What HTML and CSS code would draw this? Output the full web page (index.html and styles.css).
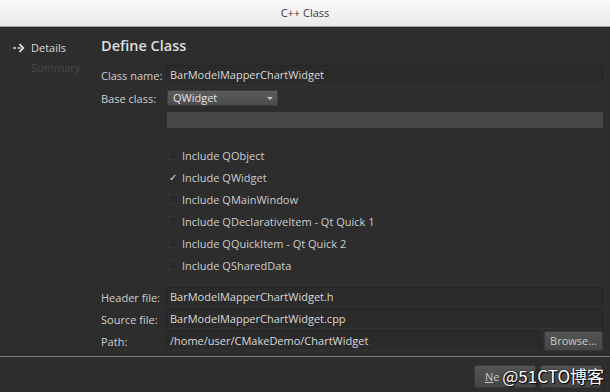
FILE: index.html
```html
<!DOCTYPE html>
<html lang="en">
<head>
    <meta charset="UTF-8">
    <title>C++ Class</title>
<link rel="stylesheet" href="styles.css">
</head>
<body>

<div class="window">
    <div class="titlebar">C++ Class</div>

    <div class="main">
        <!-- wizard steps -->
        <div class="sidebar">
            <div class="step current">
                <svg class="step-arrow" width="12" height="10" viewBox="0 0 12 10">
                    <path d="M0 5h3M4.5 5h3" stroke="#d8d8d8" stroke-width="1.4"/>
                    <path d="M6.5 1.2l3.8 3.8-3.8 3.8" fill="none" stroke="#e8e8e8" stroke-width="1.8"/>
                </svg>
                Details
            </div>
            <div class="step">Summary</div>
        </div>

        <div class="content">
            <h2>Define Class</h2>

            <div class="row row-first">
                <span class="label">Class name:</span>
                <div class="field">BarModelMapperChartWidget</div>
            </div>
            <div class="row row-combo">
                <span class="label">Base class:</span>
                <div class="combo">QWidget<span class="combo-arrow"></span></div>
            </div>
            <div class="row row-blank">
                <span class="label"></span>
                <div class="blank"></div>
            </div>

            <div class="checks">
                <div class="check"><span class="box"></span>Include QObject</div>
                <div class="check"><span class="box checked">&#10003;</span>Include QWidget</div>
                <div class="check"><span class="box"></span>Include QMainWindow</div>
                <div class="check"><span class="box"></span>Include QDeclarativeItem - Qt Quick 1</div>
                <div class="check"><span class="box"></span>Include QQuickItem - Qt Quick 2</div>
                <div class="check"><span class="box"></span>Include QSharedData</div>
            </div>

            <div class="row row-file">
                <span class="label">Header file:</span>
                <div class="field">BarModelMapperChartWidget.h</div>
            </div>
            <div class="row row-file">
                <span class="label">Source file:</span>
                <div class="field">BarModelMapperChartWidget.cpp</div>
            </div>
            <div class="row row-file">
                <span class="label">Path:</span>
                <div class="field">/home/user/CMakeDemo/ChartWidget</div>
                <div class="btn browse">Browse...</div>
            </div>
        </div>
    </div>

    <div class="footer">
        <div class="btn wizard-btn"><span class="btn-text"><u>N</u>e</span></div>
        <div class="btn wizard-btn"></div>
        <div class="watermark">@51CTO博客</div>
    </div>
</div>

</body>
</html>
```

FILE: styles.css
```css
body {
    margin: 0;
    background-color: #2d2d2d;
    font-family: "Open Sans", "DejaVu Sans", sans-serif;
    font-size: 11px;
    color: #d4d4d4;
}

.window {
    width: 610px;
    height: 392px;
    display: flex;
    flex-direction: column;
    overflow: hidden;
}

.titlebar {
    height: 26px;
    line-height: 26px;
    text-align: center;
    color: #3a3a3a;
    font-size: 11px;
    background: linear-gradient(#fafafa, #e9e9e9);
    border-bottom: 1px solid #a3a3a3;
    flex-shrink: 0;
}

.main {
    display: flex;
    flex: 1;
    border-top: 1px solid #262626;
}

.sidebar {
    width: 101px;
    padding-top: 10px;
    flex-shrink: 0;
}

.step {
    height: 20px;
    line-height: 20px;
    padding-left: 31px;
    color: #4a4a4a;
    position: relative;
}

.step.current {
    color: #dadada;
}

.step-arrow {
    position: absolute;
    left: 13px;
    top: 5px;
}

.content {
    flex: 1;
    padding: 7px 7px 0 0;
}

h2 {
    margin: 0;
    height: 22px;
    line-height: 22px;
    font-size: 14.5px;
    font-weight: 600;
    color: #dedede;
}

.row {
    display: flex;
    align-items: center;
}

.row-first {
    margin-top: 8px;
    height: 20px;
}

.row-combo {
    margin-top: 5px;
    height: 16px;
}

.row-blank {
    margin-top: 6px;
    height: 16px;
}

.row-file {
    height: 20px;
    margin-top: 2px;
}

.label {
    width: 65px;
    flex-shrink: 0;
    color: #cdcdcd;
}

.field {
    flex: 1;
    height: 18px;
    line-height: 18px;
    padding-left: 3px;
    background-color: #2b2b2b;
    border: 1px solid #242424;
    border-bottom-color: #333;
    color: #d8d8d8;
}

.combo {
    position: relative;
    width: 104px;
    height: 14px;
    line-height: 14px;
    padding-left: 5px;
    margin-left: 1px;
    background: linear-gradient(#5c5c5c, #4c4c4c);
    border: 1px solid #3c3c3c;
    color: #e2e2e2;
}

.combo-arrow {
    position: absolute;
    right: 4px;
    top: 6px;
    border-left: 3px solid transparent;
    border-right: 3px solid transparent;
    border-top: 3px solid #c8c8c8;
}

.blank {
    flex: 1;
    height: 16px;
    margin-left: 1px;
    background-color: #464646;
}

.checks {
    margin-top: 16px;
    margin-left: 67px;
    margin-bottom: 11px;
}

.check {
    height: 22px;
    display: flex;
    align-items: center;
    color: #cccccc;
}

.box {
    width: 10px;
    height: 10px;
    margin-right: 4px;
    background-color: #2a2a2a;
    border: 1px solid #333;
    box-sizing: border-box;
    font-size: 10px;
    line-height: 9px;
    text-align: center;
}

.box.checked {
    border-color: transparent;
    background: none;
    color: #e0e0e0;
}

.btn {
    background: linear-gradient(#545454, #464646);
    border: 1px solid #383838;
    border-radius: 2px;
    color: #c8c8c8;
    text-align: center;
}

.browse {
    width: 57px;
    height: 18px;
    line-height: 18px;
    margin-left: 4px;
}

.footer {
    position: relative;
    height: 36px;
    border-top: 1px solid #7d7d7d;
    display: flex;
    justify-content: flex-end;
    gap: 4px;
    padding: 8px 8px 0 0;
    box-sizing: border-box;
    flex-shrink: 0;
}

.wizard-btn {
    width: 60px;
    height: 21px;
    line-height: 21px;
}

.btn-text {
    display: block;
    text-align: left;
    padding-left: 10px;
}

.watermark {
    position: absolute;
    right: 6px;
    top: 8px;
    font-family: "Noto Sans CJK SC", sans-serif;
    font-size: 17px;
    line-height: 22px;
    color: #ffffff;
    text-shadow: 0 0 2px #000, 1px 1px 1px #000;
}
```
